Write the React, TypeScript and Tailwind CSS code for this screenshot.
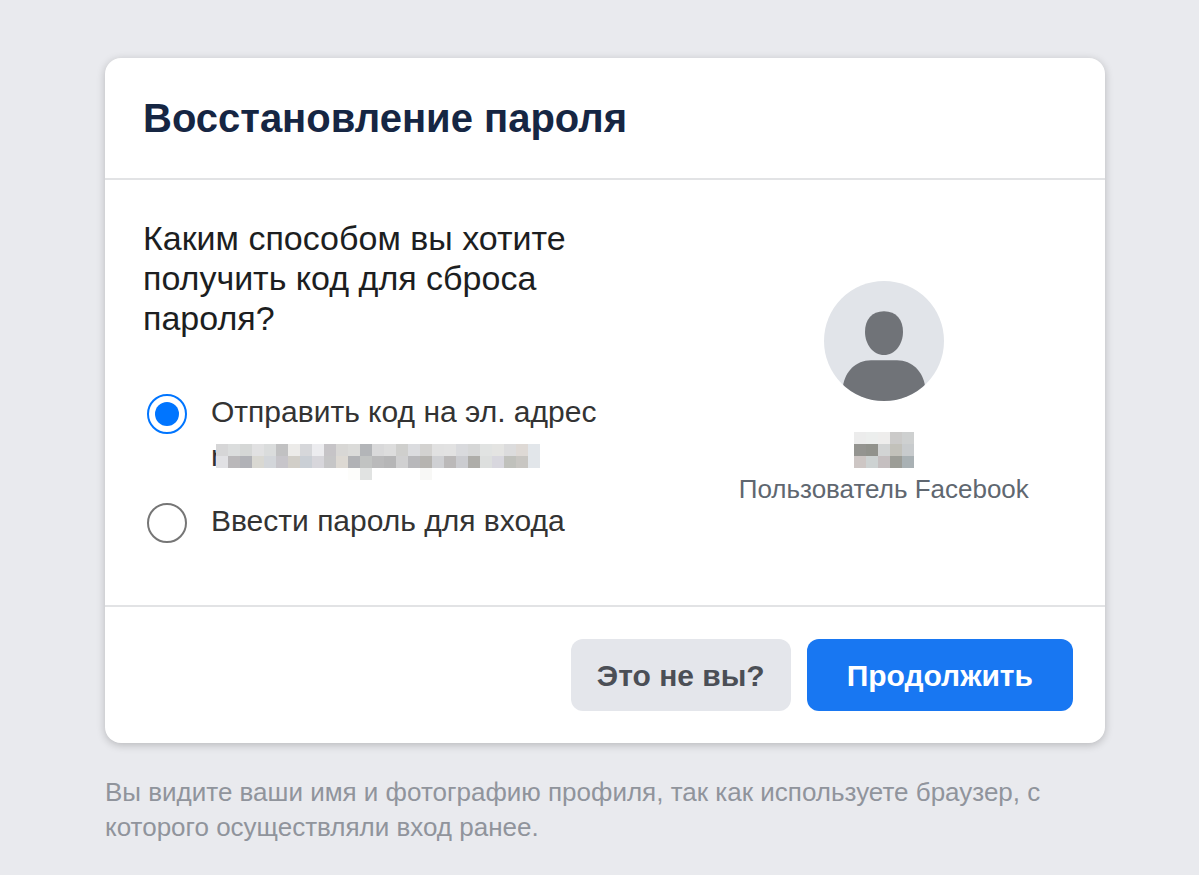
import { useState } from "react";

const HIDDEN_EMAIL = [
  ["#d6d6d7", "#dbdddd", "#d5d7d6", "#e1e1e2", "#dadcdc", "#c1c1c2", "#ecebe9", "#d6d7da", "#ececef", "#c6c4c7", "#d8d7d5", "#dbdbd9", "#b3b5b8", "#d9d9da", "#dddddd", "#cfcfcd", "#dbdcdf", "#d3d2d0", "#e1e1e1", "#e2e2e2", "#d9dadd", "#d6d7d7", "#e1e3e2", "#e4e4e2", "#dcdcdd", "#ded9d5", "#e2e6ea"],
  ["#e1e1e4", "#bab8ba", "#b1b2b7", "#d9d8d2", "#d3d6da", "#c7c5ca", "#d1cec8", "#cacfd5", "#d7d6db", "#c6c6c7", "#ddd9d3", "#b1b2b5", "#c1c3c2", "#bababb", "#b6b6b7", "#d0d0d1", "#b8b8bb", "#b6b4b0", "#cfd0d3", "#bbb9b9", "#cbccd0", "#aeada9", "#dddfde", "#d8d7de", "#c0c1bc", "#c8c6c2", "#e2e6ea"],
  ["", "", "", "", "", "", "", "", "", "", "", "#fdfdfb", "#e1e3e2", "", "", "", "", "#f8f8f6"],
];

const HIDDEN_NAME = [
  ["#ececec", "#eceeed", "#eeedec", "#cbcac9", "#ced0d0"],
  ["#949490", "#91928c", "#d2d4d4", "#c2c1ba", "#c8cbcd"],
  ["#cdc6c4", "#cdd2d2", "#c5bfc0", "#9c9d97", "#a9b1b4"],
];

function Mosaic({ rows }: { rows: string[][] }) {
  return (
    <span aria-hidden="true" className="relative block">
      {rows.map((row, y) => (
        <span key={y} className="flex">
          {row.map((color, x) => (
            <span key={x} className="size-3 shrink-0" style={{ backgroundColor: color || undefined }} />
          ))}
        </span>
      ))}
    </span>
  );
}

function MethodOption({
  id,
  checked,
  onChange,
  title,
  children,
}: {
  id: string;
  checked: boolean;
  onChange: () => void;
  title: string;
  children?: React.ReactNode;
}) {
  return (
    <div className="flex items-start gap-6">
      <input
        type="radio"
        id={id}
        name="method"
        checked={checked}
        onChange={onChange}
        className="mt-1 size-10 shrink-0 appearance-none rounded-full border-2 border-[#767676] bg-clip-content p-1.5 checked:border-[#0075ff] checked:bg-[#0075ff]"
      />
      <label htmlFor={id} className="text-[30px] leading-[44px] text-[#333333]">
        {title}
        {children}
      </label>
    </div>
  );
}

function Avatar() {
  return (
    <svg viewBox="0 0 120 120" className="size-[120px]" role="img" aria-label="Фото профиля">
      <defs>
        <clipPath id="avatar-circle">
          <circle cx="60" cy="60" r="60" />
        </clipPath>
      </defs>
      <g clipPath="url(#avatar-circle)">
        <rect width="120" height="120" fill="#e1e4e9" />
        <path
          d="M60 30.3c12.3 0 19 8.2 19 20.7C79 63.500 70.800 74 60 74S41 63.500 41 51c0-12.500 6.700-20.700 19-20.700z"
          fill="#707378"
        />
        <path d="M19 105C21 91 31.500 79.300 47 79.300h26C88.500 79.300 99 91 101 105v15H19z" fill="#707378" />
      </g>
    </svg>
  );
}

export default function App() {
  const [method, setMethod] = useState("email");

  return (
    <main className="min-h-screen bg-[#e9eaee] pt-[58px] pr-[94px] pb-7 pl-[105px] font-['Liberation_Sans',Arial,sans-serif]">
      <form
        onSubmit={(e) => e.preventDefault()}
        className="rounded-2xl bg-white shadow-[0_2px_8px_rgba(0,0,0,0.22)]"
      >
        <header className="border-b-2 border-[#e2e3e5] px-[38px] py-9">
          <h1 className="text-[40px] leading-[48px] font-bold text-[#162643]">Восстановление пароля</h1>
        </header>

        <div className="grid grid-cols-[5fr_4fr] border-b-2 border-[#e2e3e5]">
          {/* Recovery methods */}
          <div className="pt-[38px] pr-16 pb-[62px] pl-[38px]">
            <h2 className="text-[34px] leading-10 text-[#1c1e21]">
              Каким способом вы хотите получить код для сброса пароля?
            </h2>
            <div className="mt-[52px] flex flex-col gap-[21px] pl-1">
              <MethodOption
                id="method-email"
                checked={method === "email"}
                onChange={() => setMethod("email")}
                title="Отправить код на эл. адрес"
              >
                <span className="flex h-11 items-start">
                  <span className="w-[5px]">r</span>
                  <span className="mt-2.5">
                    <Mosaic rows={HIDDEN_EMAIL} />
                  </span>
                </span>
              </MethodOption>
              <MethodOption
                id="method-password"
                checked={method === "password"}
                onChange={() => setMethod("password")}
                title="Ввести пароль для входа"
              />
            </div>
          </div>

          {/* Account */}
          <div className="flex flex-col items-center justify-center pt-1 pl-0.5">
            <Avatar />
            <div className="mt-[31px]">
              <Mosaic rows={HIDDEN_NAME} />
            </div>
            <p className="mt-0.5 text-[26px] leading-[38px] text-[#606770]">Пользователь Facebook</p>
          </div>
        </div>

        <footer className="flex justify-end gap-4 p-8">
          <button
            type="button"
            className="h-[72px] rounded-xl bg-[#e4e6eb] px-[26px] text-[30px] font-bold text-[#4b4f56]"
          >
            Это не вы?
          </button>
          <button type="submit" className="h-[72px] rounded-xl bg-[#1877f2] px-10 text-[30px] font-bold text-white">
            Продолжить
          </button>
        </footer>
      </form>

      <p className="mt-8 text-[26px] leading-[35px] text-[#90949c]">
        Вы видите ваши имя и фотографию профиля, так как используете браузер, с которого осуществляли вход ранее.
      </p>
    </main>
  );
}
